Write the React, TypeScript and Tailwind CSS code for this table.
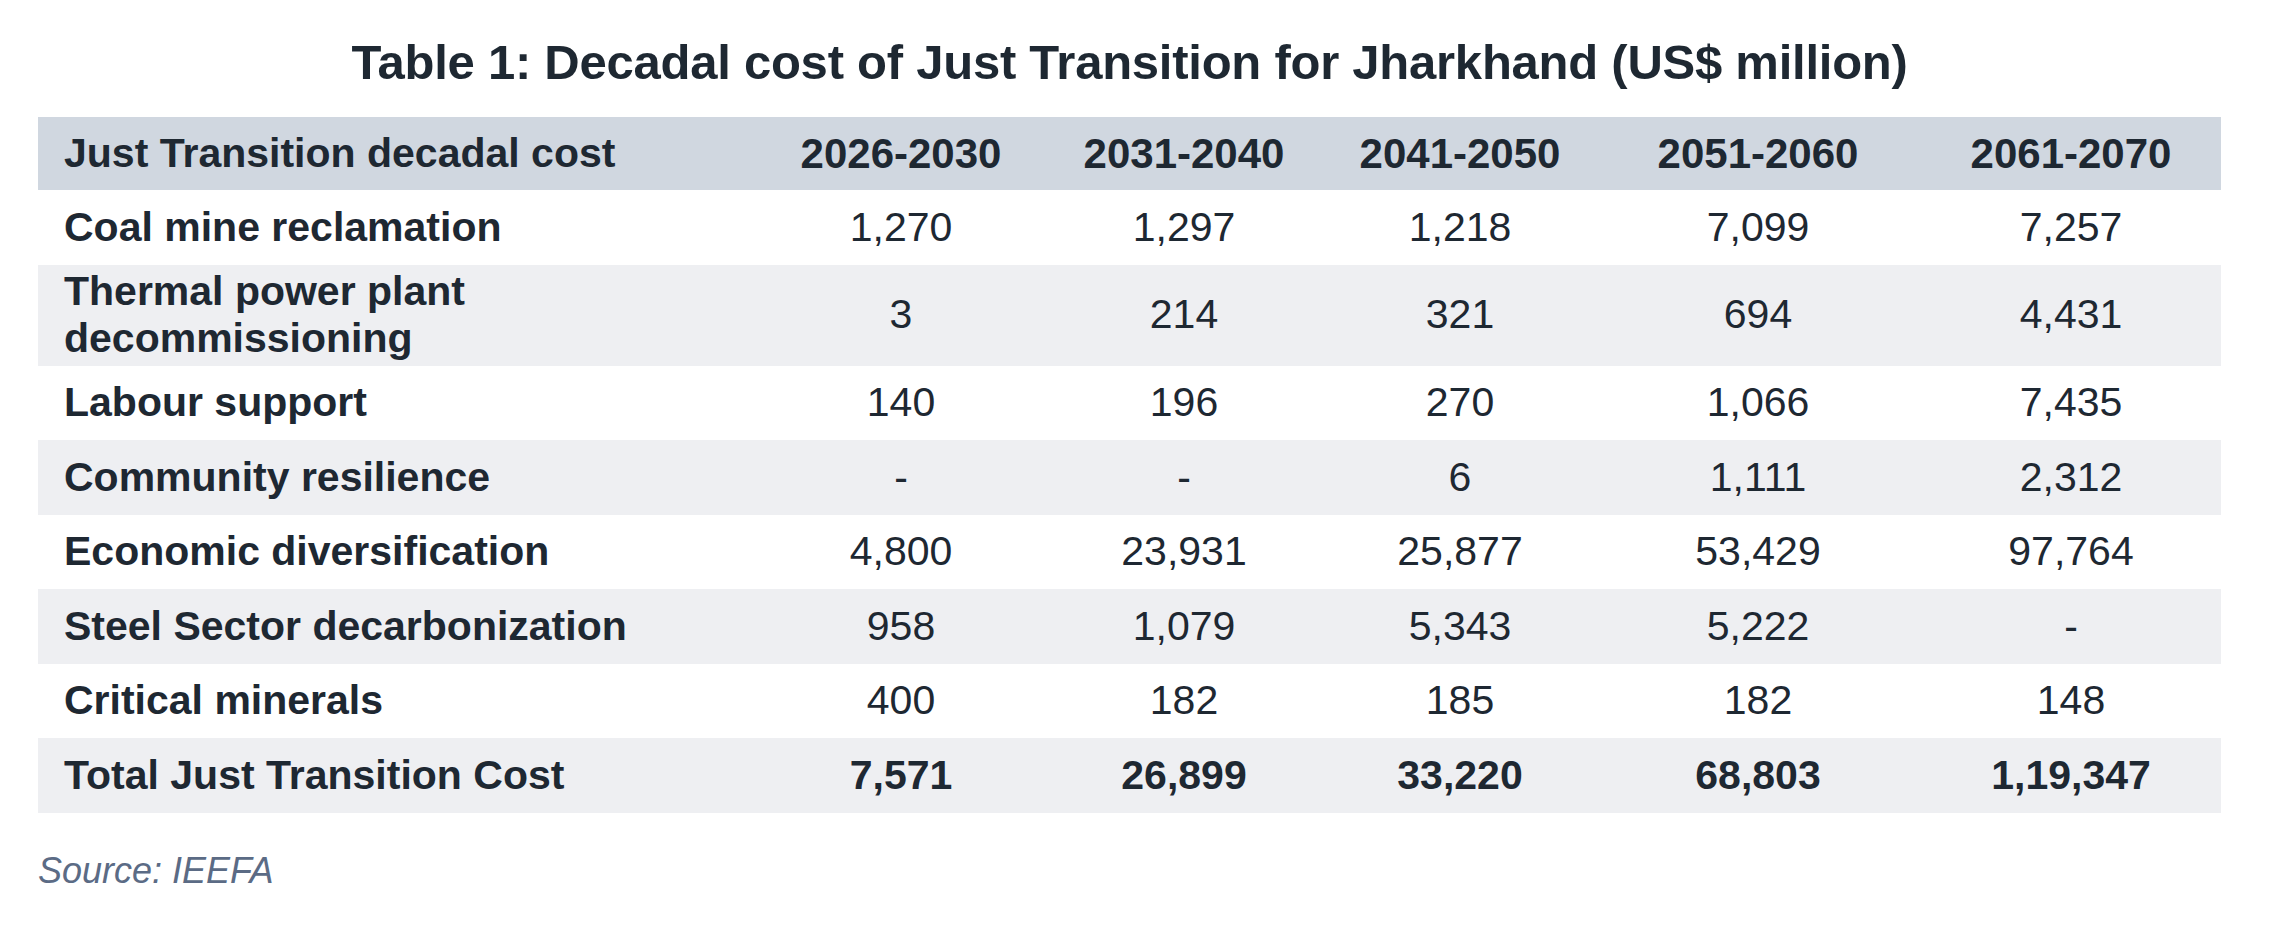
const years = ['2026-2030', '2031-2040', '2041-2050', '2051-2060', '2061-2070'];

type Row = { label: React.ReactNode; values: string[]; tall?: boolean; bold?: boolean };

const rows: Row[] = [
  { label: 'Coal mine reclamation', values: ['1,270', '1,297', '1,218', '7,099', '7,257'] },
  {
    label: (
      <>
        Thermal power plant
        <br />
        decommissioning
      </>
    ),
    values: ['3', '214', '321', '694', '4,431'],
    tall: true,
  },
  { label: 'Labour support', values: ['140', '196', '270', '1,066', '7,435'] },
  { label: 'Community resilience', values: ['-', '-', '6', '1,111', '2,312'] },
  { label: 'Economic diversification', values: ['4,800', '23,931', '25,877', '53,429', '97,764'] },
  { label: 'Steel Sector decarbonization', values: ['958', '1,079', '5,343', '5,222', '-'] },
  { label: 'Critical minerals', values: ['400', '182', '185', '182', '148'] },
  { label: 'Total Just Transition Cost', values: ['7,571', '26,899', '33,220', '68,803', '1,19,347'], bold: true },
];

const grid = 'grid grid-cols-[721px_284px_282px_270px_326px_300px]';

export default function App() {
  return (
    <div className="min-h-[928px] w-[2288px] bg-white text-[#1e2832] font-['Liberation_Sans',Arial,Helvetica,sans-serif]">
      <div className="w-[2183px] ml-[38px] pt-[34px]">
        <h1 className="text-center text-[49px] leading-[56px] font-bold tracking-[-0.005em] mb-[27px]">
          Table 1: Decadal cost of Just Transition for Jharkhand (US$ million)
        </h1>

        <div className="text-[41px]">
          {/* header */}
          <div className={`${grid} h-[73px] items-center bg-[#d0d7e0] font-bold`}>
            <div className="pl-[26px]">Just Transition decadal cost</div>
            {years.map((y) => (
              <div key={y} className="text-center text-[42px]">
                {y}
              </div>
            ))}
          </div>

          {rows.map((r, i) => (
            <div
              key={i}
              className={`${grid} items-center ${r.tall ? 'h-[101px]' : 'h-[74.5px]'} ${
                i % 2 === 1 ? 'bg-[#eeeff2]' : 'bg-white'
              }`}
            >
              <div className="pl-[26px] font-bold leading-[47px]">{r.label}</div>
              {r.values.map((v, j) => (
                <div key={j} className={`text-center ${r.bold ? 'font-bold' : ''}`}>
                  {v}
                </div>
              ))}
            </div>
          ))}
        </div>

        <p className="mt-[31px] text-[36px] italic text-[#5b6b85]">Source: IEEFA</p>
      </div>
    </div>
  );
}
